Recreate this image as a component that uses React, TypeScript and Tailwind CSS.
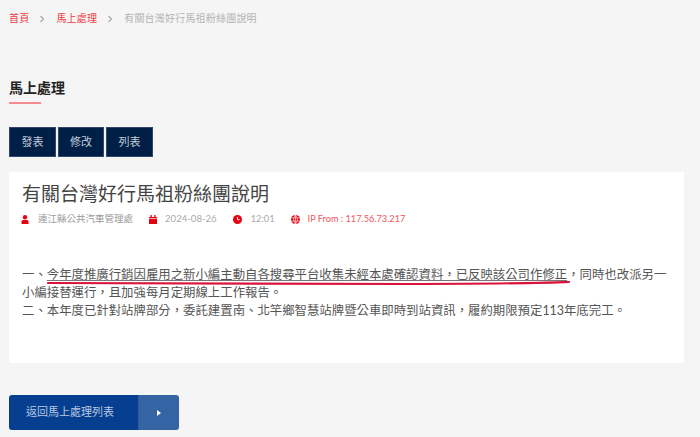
import React from 'react';

const cjk = "font-['Lato','Noto_Sans_CJK_TC',sans-serif]";

const ActionButton = ({ label, width }: { label: string; width: string }) => (
  <a className={`flex h-[30px] items-center justify-center border border-[#33476b] bg-[#001f47] text-[11px] text-[#c4ccd8] ${width}`}>
    {label}
  </a>
);

const Sep = ({ right }: { right: string }) => (
  <svg width="6" height="8" viewBox="0 0 6 8" className={`ml-[10px] ${right}`}>
    <path d="M1.5 1 L4.5 4 L1.5 7" fill="none" stroke="#a8a8a8" strokeWidth="1.2" />
  </svg>
);

export default function App() {
  return (
    <div className={`h-[437px] w-[700px] overflow-hidden bg-[#f5f5f5] pl-[9px] ${cjk}`}>
      {/* breadcrumb */}
      <div className="mt-[9px] flex h-[19px] items-center text-[10px] tracking-[0.2px]">
        <span className="text-[#ef3b45]">首頁</span>
        <Sep right="mr-[11px]" />
        <span className="text-[#ef3b45]">馬上處理</span>
        <Sep right="mr-[11px]" />
        <span className="text-[#b4b4b4]">有關台灣好行馬祖粉絲團說明</span>
      </div>

      <h2 className="mt-[50px] text-[14px] leading-[20px] font-bold text-[#222]">馬上處理</h2>
      <div className="mt-[4px] h-[2px] w-[32px] bg-[#f58a90]" />

      <div className="mt-[23px] flex gap-[2px]">
        <ActionButton label="發表" width="w-[47px]" />
        <ActionButton label="修改" width="w-[46px]" />
        <ActionButton label="列表" width="w-[47px]" />
      </div>

      <div className="relative mt-[15px] h-[191px] w-[675px] bg-white px-[13px] pt-[9px]">
        <h1 className="text-[19px] leading-[26px] font-normal text-[#444]">有關台灣好行馬祖粉絲團說明</h1>

        <div className="mt-[4px] flex h-[16px] items-center text-[9.5px] text-[#aaa]">
          <svg width="8" height="9" viewBox="0 0 7 9" className="mr-[9px] -ml-px">
            <circle cx="3.5" cy="2.3" r="2.2" fill="#e60012" />
            <path d="M0 9 V6.6 C0 5.4 1 4.9 2 4.9 H5 C6 4.9 7 5.4 7 6.6 V9 Z" fill="#e60012" />
          </svg>
          <span className="text-[#999]">連江縣公共汽車管理處</span>
          <svg width="8" height="9" viewBox="0 0 8 9" className="ml-[16px] mr-[8px]">
            <path d="M0 2 H8 V9 H0 Z" fill="#e60012" />
            <rect x="1.5" y="0" width="1.3" height="2" fill="#e60012" />
            <rect x="5.2" y="0" width="1.3" height="2" fill="#e60012" />
            <rect x="0" y="3" width="8" height="0.6" fill="#fff" />
          </svg>
          <span className="text-[9.6px] text-[#aaa]">2024-08-26</span>
          <svg width="9" height="9" viewBox="0 0 9 9" className="ml-[16px] mr-[9px]">
            <circle cx="4.5" cy="4.5" r="4.5" fill="#e60012" />
            <path d="M4.5 2 V4.7 H6.6" fill="none" stroke="#fff" strokeWidth="1" />
          </svg>
          <span className="text-[9.3px] text-[#aaa]">12:01</span>
          <svg width="9" height="9" viewBox="0 0 9 9" className="ml-[16px] mr-[8px]">
            <circle cx="4.5" cy="4.5" r="4.5" fill="#e60012" />
            <path d="M0 3 H9 M0 6 H9 M4.5 0 V9 M4.5 0 C2 2.5 2 6.5 4.5 9 M4.5 0 C7 2.5 7 6.5 4.5 9" fill="none" stroke="#fff" strokeWidth="0.6" />
          </svg>
          <span className="text-[9.2px] text-[#f0555d]">IP From : 117.56.73.217</span>
        </div>

        <div className="mt-[39px] text-[12.4px] leading-[18px] text-[#555]">
          <p>
            一、<span className="underline decoration-[#777] underline-offset-1">今年度推廣行銷因雇用之新小編主動自各搜尋平台收集未經本處確認資料，已反映該公司作修正</span>，同時也改派另一小編接替運行，且加強每月定期線上工作報告。
          </p>
          <p>二、本年度已針對站牌部分，委託建置南、北竿鄉智慧站牌暨公車即時到站資訊，履約期限預定113年底完工。</p>
        </div>

        {/* hand drawn red mark over the text */}
        <svg width="530" height="6" viewBox="0 0 530 6" className="absolute left-[38px] top-[109px]">
          <path d="M1 2 C120 3 240 3.4 360 3 C430 2.8 490 2.4 522 0.8" fill="none" stroke="#d9143a" strokeWidth="2.2" strokeLinecap="round" />
        </svg>
      </div>

      <a className="mt-[32px] flex h-[35px] w-[170px] overflow-hidden rounded-[3px] text-[11px] text-[#b9c8e2]">
        <span className="flex w-[129px] items-center bg-[#063f8f] pl-[17px]">返回馬上處理列表</span>
        <span className="flex flex-1 items-center justify-center border-l border-[#2f5a9e] bg-[#3564a4]">
          <svg width="4" height="6" viewBox="0 0 4 6">
            <path d="M0 0 L4 3 L0 6 Z" fill="#fff" />
          </svg>
        </span>
      </a>
    </div>
  );
}
